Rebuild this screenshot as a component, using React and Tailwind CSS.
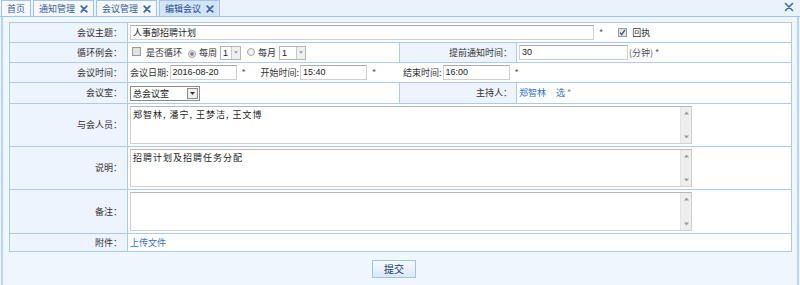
import React from 'react';

const font = { fontFamily: '"Noto Sans CJK SC", "Noto Sans", sans-serif' };
const num = { fontFamily: '"Liberation Sans", Arial, sans-serif' };

function XIcon({ size = 7, color = '#3f67a3', width = 2 }) {
  return (
    <svg width={size} height={size} viewBox="0 0 10 10">
      <path d="M1.5 1.5 L8.5 8.5 M8.5 1.5 L1.5 8.5" stroke={color} strokeWidth={width} strokeLinecap="round" />
    </svg>
  );
}

function Tab({ label, active, closable }) {
  return (
    <div
      className={`flex items-center gap-[5px] h-[16px] px-[5px] border border-b-0 border-[#a3c4e6] text-[9px] leading-none ${
        active ? 'bg-[#d3e4f7] text-[#1f4e8c]' : 'bg-[#f4f8fd] text-[#3a5f8f]'
      }`}
    >
      <span>{label}</span>
      {closable && <XIcon size={8} width={2.2} />}
    </div>
  );
}

function TextInput({ value, w, digits }) {
  return (
    <div
      className="h-[15px] border border-[#d0d0d0] border-t-[#aaaaaa] bg-white px-[2px] text-[9px] leading-[13px] text-[#222]"
      style={{ width: w, ...(digits ? num : {}), ...(digits ? { fontSize: 9 } : {}) }}
    >
      {value}
    </div>
  );
}

function MiniSelect({ value, w }) {
  return (
    <div className="flex h-[14px] border border-[#b5b5b5] bg-white" style={{ width: w }}>
      <span className="flex-1 px-[2px] text-[9px] leading-[12px] text-[#222]" style={num}>{value}</span>
      <span className="flex w-[9px] items-center justify-center border-l border-[#c8c8c8] bg-[#f0f0f0]">
        <svg width="4" height="3" viewBox="0 0 5 3"><path d="M0 0 L5 0 L2.5 3 Z" fill="#9a9a9a" /></svg>
      </span>
    </div>
  );
}

function Radio({ checked }) {
  return (
    <span className="inline-flex h-[8px] w-[8px] items-center justify-center rounded-full border border-[#a8a8a8] bg-[#f0f0f0]">
      {checked && <span className="h-[4px] w-[4px] rounded-full bg-[#8a8a8a]" />}
    </span>
  );
}

function Check({ checked }) {
  return (
    <span className="inline-flex h-[9px] w-[9px] items-center justify-center border border-[#9a9a9a] bg-[#e2e2e2]">
      {checked && (
        <svg width="7" height="7" viewBox="0 0 8 8"><path d="M1.2 4 L3 6.5 L6.8 1" stroke="#2b4f8f" strokeWidth="1.4" fill="none" /></svg>
      )}
    </span>
  );
}

function TextArea({ value, h }) {
  return (
    <div className="flex w-[562px] border border-[#d0d0d0] border-t-[#b8b8b8] bg-white" style={{ height: h }}>
      <div className="flex-1 px-[2px] pt-[1px] text-[9px] leading-[13px] tracking-[1px] text-[#222]">{value}</div>
      <div className="flex w-[11px] flex-col items-center justify-between border-l border-[#e4e4e4] bg-[#eeeeee] py-[4px]">
        <svg width="5" height="4" viewBox="0 0 5 4"><path d="M0 3.5 L5 3.5 L2.5 0.5 Z" fill="#9a9a9a" /></svg>
        <svg width="5" height="4" viewBox="0 0 5 4"><path d="M0 0.5 L5 0.5 L2.5 3.5 Z" fill="#9a9a9a" /></svg>
      </div>
    </div>
  );
}

const labelCls = 'bg-[#eef4fd] border border-[#a9cbed] text-right pr-[5px] text-[9px] text-[#333] whitespace-nowrap';
const valueCls = 'bg-white border border-[#a9cbed] pl-[2px] text-[9px] text-[#333]';

export default function App() {
  return (
    <div className="h-[285px] w-[800px] overflow-hidden bg-[#f0f6fe]" style={font}>
      {/* 标签栏 */}
      <div className="flex h-[17px] items-end justify-between border-b border-[#9cc6ec] bg-[#eaf2fc] pl-[1px] pr-[6px]">
        <div className="flex gap-[2px]">
          <Tab label="首页" />
          <Tab label="通知管理" closable />
          <Tab label="会议管理" closable />
          <Tab label="编辑会议" active closable />
        </div>
        <div className="mb-[4px]">
          <XIcon size={10} color="#3b6fb5" width={1.6} />
        </div>
      </div>

      <div className="mx-[1px] h-[268px] border-x-2 border-[#b9d5f1] px-[6px] pt-[5px]">
        <table className="w-[783px] border-collapse border border-[#a9cbed]">
          <colgroup>
            <col className="w-[118px]" />
            <col className="w-[272px]" />
            <col className="w-[117px]" />
            <col />
          </colgroup>
          <tbody>
            <tr className="h-[20px]">
              <td className={labelCls}>会议主题：</td>
              <td className={valueCls} colSpan={3}>
                <div className="flex items-center">
                  <TextInput value="人事部招聘计划" w={464} />
                  <span className="ml-[5px] text-[#555]">*</span>
                  <span className="ml-[15px] flex items-center gap-[5px]">
                    <Check checked />
                    <span>回执</span>
                  </span>
                </div>
              </td>
            </tr>
            <tr className="h-[20px]">
              <td className={labelCls}>循环例会：</td>
              <td className={valueCls}>
                <div className="flex items-center">
                  <span className="ml-[2px]"><Check /></span>
                  <span className="ml-[5px]">是否循环</span>
                  <span className="ml-[6px]"><Radio checked /></span>
                  <span className="ml-[3px] mr-[3px]">每周</span>
                  <MiniSelect value="1" w={21} />
                  <span className="ml-[6px]"><Radio /></span>
                  <span className="ml-[3px] mr-[3px]">每月</span>
                  <MiniSelect value="1" w={27} />
                </div>
              </td>
              <td className={labelCls + ' !pr-[4px]'}>提前通知时间：</td>
              <td className={valueCls}>
                <div className="flex items-center">
                  <TextInput value="30" w={109} digits />
                  <span className="ml-[1px] text-[#555]">(分钟) *</span>
                </div>
              </td>
            </tr>
            <tr className="h-[20px]">
              <td className={labelCls}>会议时间：</td>
              <td className={valueCls} colSpan={3}>
                <div className="flex items-center">
                  <span className="mr-[1px]">会议日期:</span>
                  <TextInput value="2016-08-20" w={67} digits />
                  <span className="ml-[5px] w-[19px] text-[#555]">*</span>
                  <span className="mr-[1px]">开始时间:</span>
                  <TextInput value="15:40" w={67} digits />
                  <span className="ml-[5px] w-[31px] text-[#555]">*</span>
                  <span className="mr-[1px]">结束时间:</span>
                  <TextInput value="16:00" w={67} digits />
                  <span className="ml-[5px] text-[#555]">*</span>
                </div>
              </td>
            </tr>
            <tr className="h-[21px]">
              <td className={labelCls}>会议室：</td>
              <td className={valueCls}>
                <div className="flex h-[15px] w-[70px] items-center border border-[#8a8a8a] bg-white">
                  <span className="flex-1 px-[2px] text-[9px] leading-[13px] text-[#222]">总会议室</span>
                  <span className="mr-[1px] flex h-[11px] w-[11px] items-center justify-center border border-[#8a8a8a] bg-[#efefef]">
                    <svg width="5" height="3" viewBox="0 0 5 3"><path d="M0 0 L5 0 L2.5 3 Z" fill="#333" /></svg>
                  </span>
                </div>
              </td>
              <td className={labelCls + ' !pr-[4px]'}>主持人：</td>
              <td className={valueCls}>
                <span className="text-[#2f72c4]">郑智林</span>
                <span className="ml-[10px] text-[#2f72c4]">选</span>
                <span className="ml-[2px] text-[#888]">*</span>
              </td>
            </tr>
            <tr className="h-[43px]">
              <td className={labelCls}>与会人员：</td>
              <td className={valueCls} colSpan={3}>
                <TextArea value="郑智林, 潘宁, 王梦洁, 王文博" h={38} />
              </td>
            </tr>
            <tr className="h-[43px]">
              <td className={labelCls}>说明：</td>
              <td className={valueCls} colSpan={3}>
                <TextArea value="招聘计划及招聘任务分配" h={38} />
              </td>
            </tr>
            <tr className="h-[44px]">
              <td className={labelCls}>备注：</td>
              <td className={valueCls} colSpan={3}>
                <TextArea value="" h={39} />
              </td>
            </tr>
            <tr className="h-[18px]">
              <td className={labelCls}>附件：</td>
              <td className={valueCls} colSpan={3}>
                <span className="text-[#2f72c4]">上传文件</span>
              </td>
            </tr>
          </tbody>
        </table>

        <div className="mt-[8px] flex justify-center">
          <button className="ml-[-12px] h-[18px] w-[44px] border border-[#9cc3ea] bg-gradient-to-b from-[#f6faff] to-[#d9e8f8] text-[10px] leading-[16px] text-[#24406b]">
            提交
          </button>
        </div>
      </div>
    </div>
  );
}
